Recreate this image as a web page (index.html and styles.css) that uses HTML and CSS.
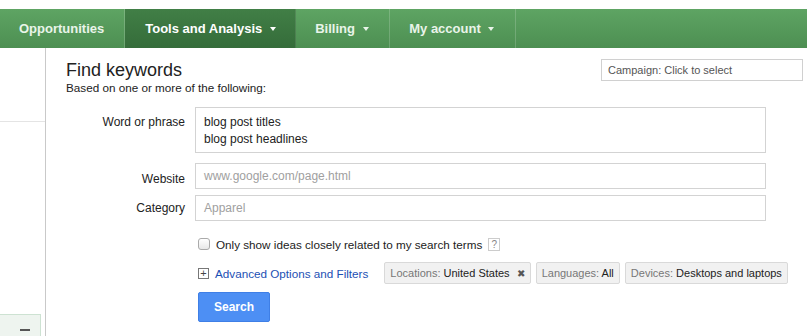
FILE: index.html
```html
<!DOCTYPE html>
<html>
<head>
<meta charset="utf-8">
<link rel="stylesheet" href="styles.css">
</head>
<body>
<div class="topgap"></div>
<nav class="nav">
  <a class="nav-item">Opportunities</a>
  <a class="nav-item active">Tools and Analysis <span class="caret"></span></a>
  <a class="nav-item">Billing <span class="caret"></span></a>
  <a class="nav-item">My account <span class="caret"></span></a>
</nav>
<div class="main">
  <aside class="side">
    <div class="side-top"></div>
    <div class="side-rest"></div>
    <div class="side-box"><span class="dash"></span></div>
  </aside>
  <section class="content">
    <div class="head">
      <div>
        <h1 class="title">Find keywords</h1>
        <div class="sub">Based on one or more of the following:</div>
      </div>
      <div class="campaign">Campaign: Click to select</div>
    </div>
    <div class="form">
      <label class="lbl lbl-top">Word or phrase</label>
      <div class="field area">
        <div>blog post titles</div>
        <div>blog post headlines</div>
      </div>
      <label class="lbl">Website</label>
      <div class="field input ph gap-below">www.google.com/page.html</div>
      <label class="lbl">Category</label>
      <div class="field input ph">Apparel</div>
    </div>
    <div class="opts">
      <div class="check-row">
        <span class="checkbox"></span>
        <span class="check-text">Only show ideas closely related to my search terms</span>
        <span class="help">?</span>
      </div>
      <div class="adv-row">
        <span class="plus">+</span>
        <a class="adv">Advanced Options and Filters</a>
        <span class="chips">
          <span class="chip"><span class="k">Locations:</span> United States <span class="x">✖</span></span>
          <span class="chip"><span class="k">Languages:</span> All</span>
          <span class="chip"><span class="k">Devices:</span> Desktops and laptops</span>
        </span>
      </div>
      <button class="search">Search</button>
    </div>
  </section>
</div>
</body>
</html>
```
FILE: styles.css
```css
* { box-sizing: border-box; }
html, body { margin: 0; padding: 0; background: #fff; }
body {
  font-family: "Liberation Sans", Arial, sans-serif;
  color: #222;
  width: 807px;
  height: 336px;
  overflow: hidden;
}
.topgap { height: 9px; }
.nav {
  display: flex;
  height: 39px;
  background: linear-gradient(#5ea463, #4d8f52);
}
.nav-item {
  display: flex;
  align-items: center;
  padding: 0 20px 0 19px;
  color: #e9f4e9;
  font-weight: bold;
  font-size: 13px;
  border-right: 1px solid rgba(255,255,255,0.18);
  white-space: pre;
}
.nav-item:nth-child(2) { width: 171px; padding-left: 20px; }
.nav-item:nth-child(3) { width: 94px; }
.nav-item:nth-child(4) { width: 126px; }
.nav-item.active {
  background: linear-gradient(#417f46, #356c3a);
  color: #fff;
  border-right-color: rgba(255,255,255,0.1);
}
.caret {
  display: inline-block;
  width: 0; height: 0;
  border-left: 3.5px solid transparent;
  border-right: 3.5px solid transparent;
  border-top: 4px solid currentColor;
  margin-left: 4px;
  margin-top: 1px;
}
.main { display: flex; height: 288px; }
.side {
  width: 46px;
  border-right: 1px solid #c9c9c9;
  display: flex;
  flex-direction: column;
}
.side-top { height: 74px; border-bottom: 1px solid #e4e4e4; width: 45px; }
.side-rest { flex: 1; }
.side-box {
  height: 22px;
  width: 41px;
  background: #eef4ef;
  border: 1px solid #cde2d2;
  border-bottom: none;
  border-left: none;
  position: relative;
}
.dash {
  position: absolute;
  left: 20px; top: 14px;
  width: 10px; height: 2px;
  background: #555;
}
.content { flex: 1; padding: 11px 4px 0 20px; }
.head { display: flex; justify-content: space-between; align-items: flex-start; }
.title { margin: 0; font-size: 18px; font-weight: normal; line-height: 20px; color: #222; margin-top: 1px; }
.sub { font-size: 11.7px; line-height: 14px; margin-top: 1px; }
.campaign {
  width: 202px; height: 22px;
  border: 1px solid #d0d0d0;
  font-size: 11px; color: #555;
  padding: 4px 0 0 6px;
}
.form {
  display: grid;
  grid-template-columns: 119px 571px;
  column-gap: 10px;
  margin-top: 12px;
}
.lbl { font-size: 12px; display: flex; align-items: center; justify-content: flex-end; color: #222; }
.lbl-top { align-items: flex-start; padding-top: 8px; }
.field { border: 1px solid #d3d3d3; font-size: 12px; }
.area { height: 46px; padding: 6px 8px; line-height: 17px; margin-bottom: 10px; }
.input { height: 26px; padding: 0 8px; display: flex; align-items: center; }
.gap-below { margin-bottom: 6px; }
.ph { color: #a0a0a0; }
.opts { padding-left: 132px; }
.check-row { display: flex; align-items: center; height: 18px; margin-top: 14px; font-size: 11.7px; }
.checkbox {
  width: 12px; height: 12px;
  border: 1px solid #aaa; border-radius: 3px;
  background: linear-gradient(#fff, #e8e8e8);
  margin-right: 6px;
}
.help {
  margin-left: 6px;
  width: 12px; height: 13px;
  border: 1px solid #ccc;
  font-size: 10px; color: #888;
  display: flex; align-items: center; justify-content: center;
}
.adv-row { display: flex; align-items: center; margin-top: 9px; height: 22px; font-size: 11.7px; }
.plus {
  width: 11px; height: 11px;
  border: 1px solid #777;
  font-size: 11px; line-height: 8px;
  display: flex; align-items: center; justify-content: center;
  color: #444;
  margin-right: 6px;
}
.adv { color: #1c4fb4; margin-right: 16px; }
.chips { display: flex; gap: 5px; }
.chip {
  height: 22px;
  background: #f1f1f1;
  border: 1px solid #d9d9d9;
  border-radius: 2px;
  font-size: 11px;
  padding: 0 5px;
  display: flex; align-items: center; white-space: pre;
  color: #222;
}
.chip .k { color: #777; }
.chip .x { color: #555; font-size: 10px; margin-left: 4px; }
.search {
  display: block;
  margin-top: 8px;
  width: 72px; height: 30px;
  background: #4d8ff4;
  border: 1px solid #3f7fe6;
  border-radius: 2px;
  color: #fff;
  font-family: "Liberation Sans", Arial, sans-serif;
  font-weight: bold;
  font-size: 12px;
}
```
